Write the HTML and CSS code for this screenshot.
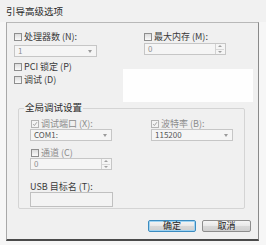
FILE: index.html
```html
<!DOCTYPE html>
<html lang="zh-CN">
<head>
<meta charset="utf-8">
<link rel="stylesheet" href="styles.css">
</head>
<body>
<div class="title">引导高级选项</div>
<div class="dialog">
  <div class="top">
    <div class="col">
      <label class="chk"><span class="box"></span>处理器数 (N):</label>
      <div class="select s-proc"><span class="val">1</span><span class="arrow"></span></div>
      <label class="chk pci"><span class="box"></span>PCI 锁定 (P)</label>
      <label class="chk dbg"><span class="box"></span>调试 (D)</label>
    </div>
    <div class="col">
      <label class="chk"><span class="box"></span>最大内存 (M):</label>
      <div class="spin s-mem"><span class="val">0</span><span class="btns"><span class="up"></span><span class="dn"></span></span></div>
    </div>
  </div>
  <div class="group">
    <div class="legend">全局调试设置</div>
    <div class="gtop">
      <div class="col">
        <label class="chk dis"><span class="box on"><svg viewBox="0 0 8 8"><path d="M1.5 4.2 L3.2 6 L6.6 1.6" /></svg></span>调试端口 (X):</label>
        <div class="select s-com"><span class="val dark">COM1:</span><span class="arrow"></span></div>
      </div>
      <div class="col">
        <label class="chk dis"><span class="box on"><svg viewBox="0 0 8 8"><path d="M1.5 4.2 L3.2 6 L6.6 1.6" /></svg></span>波特率 (B):</label>
        <div class="select s-baud"><span class="val dark">115200</span><span class="arrow"></span></div>
      </div>
    </div>
    <label class="chk dis chan"><span class="box"></span>通道 (C)</label>
    <div class="spin s-chan"><span class="val">0</span><span class="btns"><span class="up"></span><span class="dn"></span></span></div>
    <div class="usb">USB 目标名 (T):</div>
    <div class="input"></div>
  </div>
  <div class="buttons">
    <button class="btn default">确定</button>
    <button class="btn">取消</button>
  </div>
  <div class="patch"></div>
</div>
</body>
</html>
```
FILE: styles.css
```css
* { box-sizing: border-box; }
html, body { margin: 0; padding: 0; }
body {
  width: 266px;
  height: 245px;
  overflow: hidden;
  background: #f6f6f6;
  font-family: "Noto Sans CJK SC", "DejaVu Sans", sans-serif;
  font-size: 9px;
  color: #3a3a3a;
}
.title {
  height: 22px;
  line-height: 22px;
  padding-left: 6px;
  font-size: 9.5px;
  color: #2a2a2a;
  background: #f1f1f1;
}
.dialog {
  position: relative;
  margin-left: 6px;
  width: 253px;
  background: #f0f0f0;
  border-top: 1px solid #b8b8b8;
  border-left: 1px solid #a8a8a8;
  border-right: 1px solid #8a8a8a;
  border-bottom: 2px solid #4a4a4a;
  padding: 8px 7px 7px 7px;
}
.top {
  display: grid;
  grid-template-columns: 130px 1fr;
}
.col { display: flex; flex-direction: column; align-items: flex-start; }
.chk {
  display: flex;
  align-items: center;
  height: 11px;
  line-height: 11px;
  white-space: nowrap;
}
.box {
  display: inline-block;
  flex: none;
  width: 8px;
  height: 8px;
  margin-right: 2px;
  border: 1px solid #8e8e8e;
  background: linear-gradient(#dcdcdc, #fafafa);
}
.box svg { display: block; width: 6px; height: 6px; }
.box svg path { fill: none; stroke: #9a9a9a; stroke-width: 1.2; }
.box.on { border-color: #b4b4b4; background: #f4f4f4; }
.dis { color: #8c8c8c; }
.pci { margin-top: 4px; }
.dbg { margin-top: 2px; }
.select, .spin {
  display: flex;
  align-items: center;
  justify-content: space-between;
  height: 12px;
  border: 1px solid #c6c6c6;
  background: #f5f5f5;
  padding-left: 3px;
}
.val { color: #909090; font-size: 8px; line-height: 10px; }
.val.dark { color: #555; }
.arrow {
  width: 0; height: 0;
  margin-right: 4px;
  border-left: 2.5px solid transparent;
  border-right: 2.5px solid transparent;
  border-top: 3px solid #9a9a9a;
}
.btns {
  display: flex;
  flex-direction: column;
  width: 9px;
  height: 10px;
  border-left: 1px solid #d2d2d2;
  margin-right: 1px;
}
.btns span { flex: 1; position: relative; }
.btns .up { border-bottom: 1px solid #d8d8d8; }
.btns .up::after, .btns .dn::after {
  content: "";
  position: absolute;
  left: 2px;
  top: 1px;
  border-left: 2px solid transparent;
  border-right: 2px solid transparent;
}
.btns .up::after { border-bottom: 2px solid #a0a0a0; }
.btns .dn::after { border-top: 2px solid #a0a0a0; }
.s-proc { width: 83px; margin-top: 3px; }
.s-mem { width: 82px; margin-top: 1px; }
.group {
  margin: 23px 6px 0 4px;
  border: 1px solid #d4d4d4;
  border-radius: 2px;
  padding: 0 6px 0 12px;
}
.legend {
  width: fit-content;
  margin: -8px 0 0 -7px;
  padding: 0 1px;
  background: #f0f0f0;
  font-size: 9.5px;
  line-height: 12px;
  color: #2a2a2a;
}
.gtop {
  display: grid;
  grid-template-columns: 120px 1fr;
  margin-top: 5px;
}
.s-com { width: 82px; margin-left: -1px; }
.s-baud { width: 82px; }
.chan { margin-top: 6px; }
.s-chan { width: 82px; margin-left: -1px; }
.usb {
  margin-top: 12px;
  height: 10px;
  line-height: 10px;
  color: #3a3a3a;
  margin-left: -1px;
}
.input {
  width: 83px;
  height: 15px;
  margin: 0 0 1px -1px;
  border: 1px solid #c0c0c0;
  background: #f3f3f3;
}
.buttons {
  display: flex;
  justify-content: flex-end;
  gap: 6px;
  margin-top: 11px;
}
.btn {
  width: 49px;
  height: 12px;
  padding: 0;
  font-family: inherit;
  font-size: 9px;
  line-height: 10px;
  color: #222;
  border: 1px solid #8d8d8d;
  border-radius: 2px;
  background: linear-gradient(#f4f4f4 0%, #e8e8e8 50%, #d8d8d8 51%, #d0d0d0 100%);
}
.btn.default { width: 48px; border-color: #3c8cc0; box-shadow: inset 0 0 0 1px #9fd3f2; }
.patch {
  position: absolute;
  left: 116px;
  top: 46px;
  width: 130px;
  height: 33px;
  background: #fefefe;
}
```
